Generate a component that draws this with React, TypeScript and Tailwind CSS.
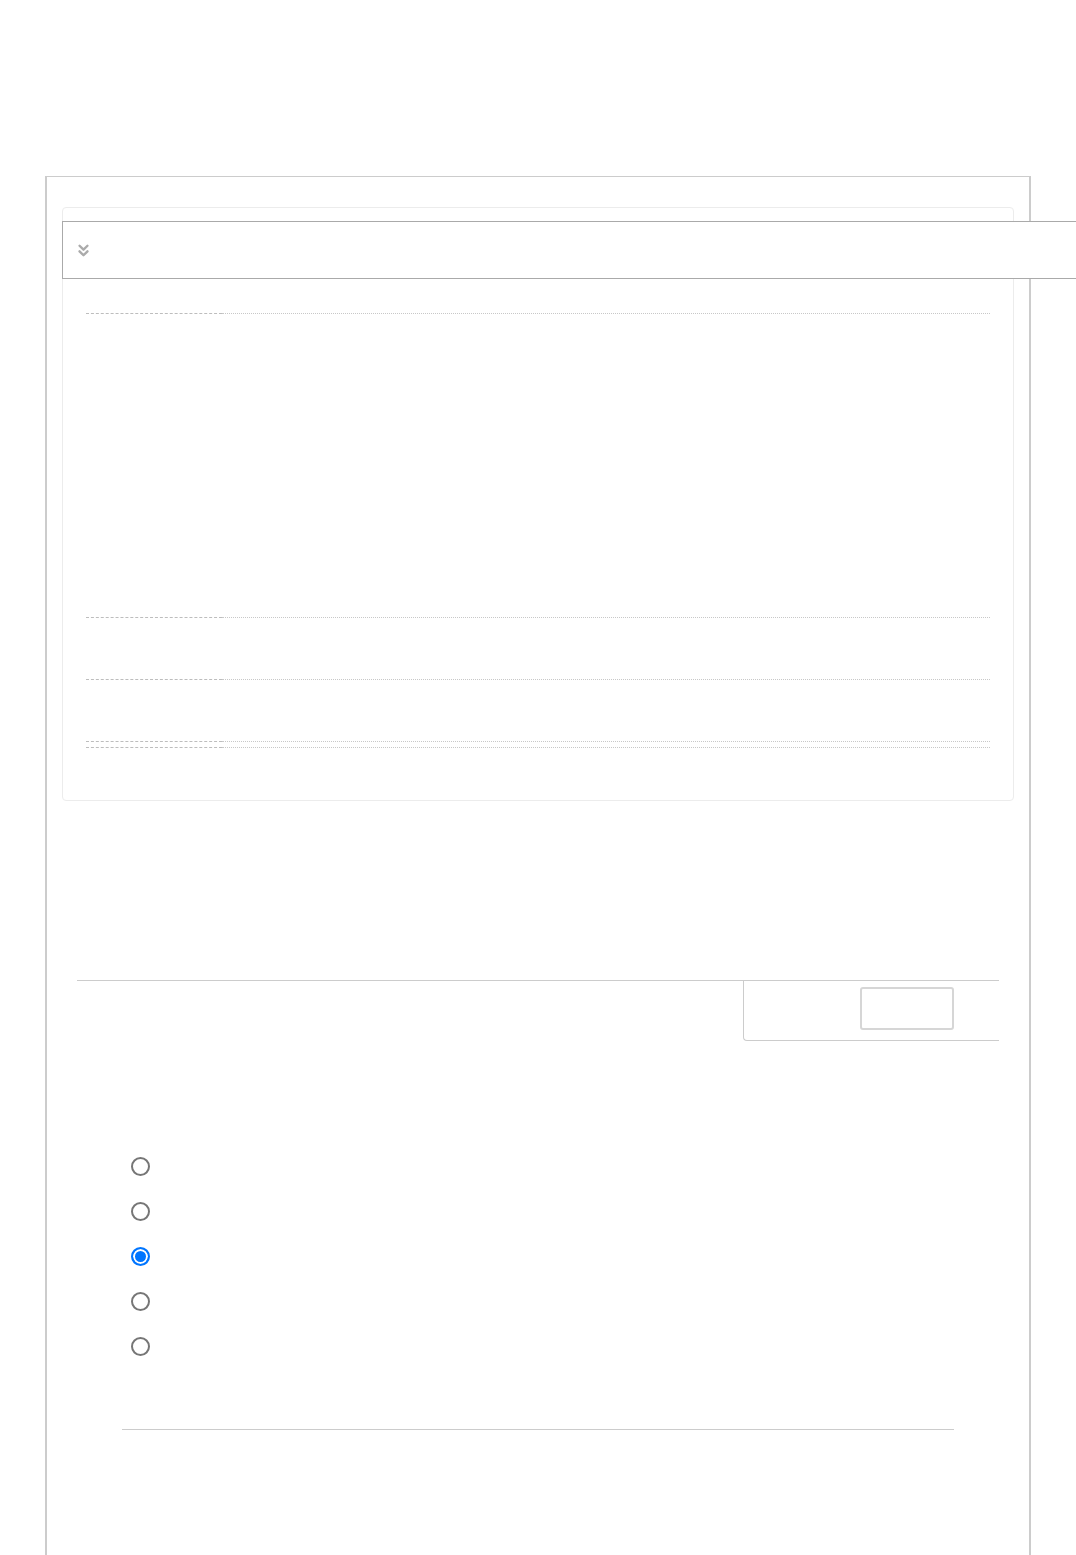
import { ChevronsDown } from 'lucide-react';

function DottedRule({ className = '' }: { className?: string }) {
  return (
    <div className={`flex ${className}`}>
      <div className="w-[136px] border-t border-dashed border-[#bdbdbd]" />
      <div className="flex-1 border-t border-dotted border-[#c8c8c8]" />
    </div>
  );
}

const options = ['a', 'b', 'c', 'd', 'e'];

export default function App() {
  return (
    <div className="w-full min-h-[1555px] overflow-hidden bg-white pt-[176px] font-['Liberation_Sans',sans-serif]">
      <div className="ml-[45px] w-[986px] min-h-[1379px] border-t border-x-2 border-[#cccccc] px-[15px] pt-[30px]">
        {/* collapsible panel */}
        <div className="rounded-[4px] border border-[#ececec] pt-[13px] pb-[52px]">
          <div className="-ml-px flex h-[58px] w-[1030px] items-center border border-[#aaaaaa] bg-white pl-[11px]">
            <ChevronsDown size={19} strokeWidth={3} className="text-[#ababab]" />
          </div>

          <div className="px-[23px] pt-[34px]">
            <DottedRule />
            <DottedRule className="mt-[303px]" />
            <DottedRule className="mt-[61px]" />
            <DottedRule className="mt-[61px]" />
            <DottedRule className="mt-[5px]" />
          </div>
        </div>

        {/* toolbar */}
        <div className="mx-[15px] mt-[179px] border-t border-[#cccccc]">
          <div className="flex justify-end">
            <div className="h-[60px] w-[256px] rounded-bl-[4px] border-l border-b border-[#cccccc] pl-[116px] pt-[6px]">
              <div className="h-[43px] w-[94px] rounded-[3px] border-2 border-[#d6d6d6]" />
            </div>
          </div>
        </div>

        {/* options */}
        <div className="ml-[69px] mt-[116px] flex flex-col gap-[26px]">
          {options.map((o, i) => (
            <label key={o} className="flex h-[19px] items-center">
              <input
                type="radio"
                name="choice"
                defaultChecked={i === 2}
                className="m-0 h-[19px] w-[19px] appearance-none rounded-full border-2 border-[#767676] bg-white checked:border-[#0075ff] checked:bg-[#0075ff] checked:shadow-[inset_0_0_0_2px_white]"
              />
            </label>
          ))}
        </div>

        <div className="ml-[60px] mt-[73px] w-[832px] border-t border-[#cccccc]" />
      </div>
    </div>
  );
}
